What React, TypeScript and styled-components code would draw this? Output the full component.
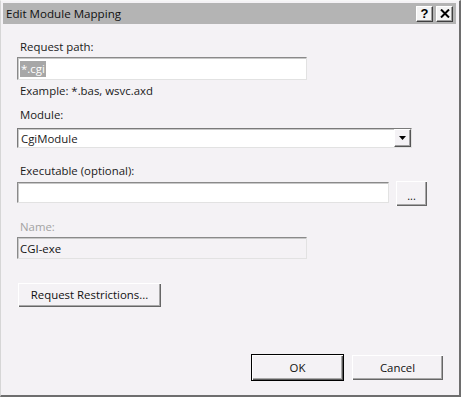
import React from "react";
import styled, { createGlobalStyle } from "styled-components";

const Global = createGlobalStyle`
  html, body { margin: 0; padding: 0; background: #f4f2f5; }
  body { font-family: "Open Sans", "Noto Sans", sans-serif; font-size: 11.4px; color: #1a1a1a; }
  * { box-sizing: border-box; }
`;

const Frame = styled.div`
  width: 461px;
  height: 397px;
  background: #f4f2f5;
  border-top: 1px solid #f7f7f7;
  border-left: 1px solid #d6d6d6;
  border-right: 2px solid #6e6e6e;
  border-bottom: 2px solid #6e6e6e;
  padding: 2px 3px 0 2px;
  display: flex;
  flex-direction: column;
`;

const TitleBar = styled.div`
  height: 21px;
  background: #b4b4b4;
  display: flex;
  align-items: center;
  padding: 0 3px 0 3px;
`;

const Title = styled.div`
  flex: 1;
  font-size: 11.6px;
  color: #111;
  line-height: 21px;
`;

const CaptionButton = styled.div`
  width: 17px;
  height: 16px;
  margin-left: 3px;
  background: #f3f3f3;
  border-top: 1px solid #ffffff;
  border-left: 1px solid #ffffff;
  border-right: 1px solid #404040;
  border-bottom: 1px solid #404040;
  box-shadow: inset -1px -1px 0 #a0a0a0;
  display: flex;
  align-items: center;
  justify-content: center;
  font-family: "Liberation Sans", Arial, sans-serif;
  font-weight: bold;
  font-size: 13px;
  color: #000;
`;

const Body = styled.div`
  flex: 1;
  display: flex;
  flex-direction: column;
  padding-left: 14px;
`;

const Label = styled.div<{ $mt: number; $disabled?: boolean }>`
  margin-top: ${(p) => p.$mt}px;
  height: 16px;
  line-height: 16px;
  padding-left: 3px;
  color: ${(p) => (p.$disabled ? "#a3a3a3" : "#1a1a1a")};
`;

const TextBox = styled.div<{ $w: number; $h: number; $mt: number; $disabled?: boolean }>`
  width: ${(p) => p.$w}px;
  height: ${(p) => p.$h}px;
  margin-top: ${(p) => p.$mt}px;
  background: ${(p) => (p.$disabled ? "#f4f2f5" : "#ffffff")};
  border-top: 1px solid #8a8a8a;
  border-left: 1px solid #8a8a8a;
  border-right: 1px solid #e2e2e2;
  border-bottom: 1px solid #e2e2e2;
  box-shadow: inset 1px 1px 0 #c8c8c8;
  display: flex;
  align-items: center;
  padding-left: 2px;
  color: #111;
`;

const Selected = styled.span`
  background: #a7a7a7;
  color: #ffffff;
  line-height: 16px;
  padding: 0 1px;
`;

const Select = styled.div`
  width: 395px;
  height: 20px;
  margin-top: 5px;
  background: #ffffff;
  border-top: 1px solid #7a7a7a;
  border-left: 1px solid #7a7a7a;
  border-right: 1px solid #e2e2e2;
  border-bottom: 1px solid #e2e2e2;
  box-shadow: inset 1px 1px 0 #c8c8c8;
  display: flex;
  align-items: center;
`;

const SelectText = styled.div`
  flex: 1;
  padding-left: 3px;
`;

const DropButton = styled.div`
  width: 17px;
  height: 18px;
  background: #f4f2f5;
  border-top: 1px solid #ffffff;
  border-left: 1px solid #ffffff;
  border-right: 1px solid #555;
  border-bottom: 1px solid #555;
  box-shadow: inset -1px -1px 0 #a0a0a0;
  display: flex;
  align-items: center;
  justify-content: center;
`;

const Row = styled.div`
  display: flex;
  align-items: flex-start;
  margin-top: 1px;
`;

const Button = styled.div<{ $w: number; $h: number; $default?: boolean }>`
  width: ${(p) => p.$w}px;
  height: ${(p) => p.$h}px;
  background: #f4f2f5;
  border: 1px solid ${(p) => (p.$default ? "#000" : "transparent")};
  box-shadow: ${(p) =>
    p.$default
      ? "inset 1px 1px 0 #ffffff, inset -1px -1px 0 #5a5a5a, inset -2px -2px 0 #a8a8a8"
      : "inset 1px 1px 0 #ffffff, inset -1px -1px 0 #666666, inset -2px -2px 0 #a8a8a8"};
  display: flex;
  align-items: center;
  justify-content: center;
  color: #111;
  padding-bottom: 1px;
`;

const EllipsisButton = styled(Button)`
  margin-left: 6px;
  font-size: 11px;
  padding-top: 4px;
`;

const RestrictButton = styled(Button)`
  margin-top: 23px;
`;

const Footer = styled.div`
  display: flex;
  justify-content: flex-end;
  gap: 7px;
  margin-top: 46px;
  padding-right: 12px;
`;

export default function App() {
  return (
    <>
      <Global />
      <Frame>
        <TitleBar>
          <Title>Edit Module Mapping</Title>
          <CaptionButton>?</CaptionButton>
          <CaptionButton>
            <svg width="10" height="9" viewBox="0 0 10 9">
              <path d="M1 0.5 L9 8.5 M9 0.5 L1 8.5" stroke="#000" strokeWidth="2" />
            </svg>
          </CaptionButton>
        </TitleBar>
        <Body>
          <Label $mt={15}>Request path:</Label>
          <TextBox $w={290} $h={23} $mt={2}>
            <Selected>*.cgi</Selected>
          </TextBox>
          <Label $mt={3}>Example: *.bas, wsvc.axd</Label>
          <Label $mt={8}>Module:</Label>
          <Select>
            <SelectText>CgiModule</SelectText>
            <DropButton>
              <svg width="7" height="4" viewBox="0 0 7 4">
                <path d="M0 0 H7 L3.5 4 Z" fill="#000" />
              </svg>
            </DropButton>
          </Select>
          <Label $mt={15}>Executable (optional):</Label>
          <Row>
            <TextBox $w={372} $h={21} $mt={2} />
            <EllipsisButton $w={33} $h={27}>...</EllipsisButton>
          </Row>
          <Label $mt={12} $disabled>Name:</Label>
          <TextBox $w={290} $h={22} $mt={2} $disabled>CGI-exe</TextBox>
          <RestrictButton $w={145} $h={26}>Request Restrictions...</RestrictButton>
          <Footer>
            <Button $w={93} $h={27} $default>OK</Button>
            <Button $w={93} $h={27}>Cancel</Button>
          </Footer>
        </Body>
      </Frame>
    </>
  );
}
